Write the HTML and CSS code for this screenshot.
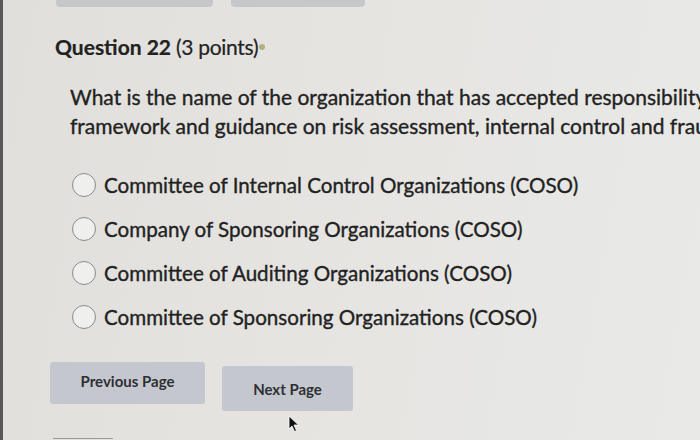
FILE: index.html
```html
<!DOCTYPE html>
<html>
<head>
<meta charset="utf-8">
<link rel="stylesheet" href="styles.css">
</head>
<body>
<div class="screen">
  <div class="topbar">
    <div class="tbtn tbtn-a"></div>
    <div class="tbtn tbtn-b"></div>
  </div>
  <div class="content">
    <h2 class="qtitle"><b>Question 22</b> <span class="pts">(3 points)</span><span class="mark"></span></h2>
    <p class="qtext">What is the name of the organization that has accepted responsibility for the<br>framework and guidance on risk assessment, internal control and fraud</p>
    <ul class="options">
      <li class="opt"><span class="radio"></span><span class="otext">Committee of Internal Control Organizations (COSO)</span></li>
      <li class="opt"><span class="radio"></span><span class="otext">Company of Sponsoring Organizations (COSO)</span></li>
      <li class="opt"><span class="radio"></span><span class="otext">Committee of Auditing Organizations (COSO)</span></li>
      <li class="opt"><span class="radio"></span><span class="otext">Committee of Sponsoring Organizations (COSO)</span></li>
    </ul>
    <div class="nav">
      <button class="btn btn-prev">Previous Page</button>
      <button class="btn btn-next">Next Page</button>
      <svg class="cursor" width="12" height="18" viewBox="0 0 12 18"><path d="M1 1 L1 14 L4 11 L6.5 16.5 L8.5 15.5 L6 10 L10.5 10 Z" fill="#111" stroke="#fff" stroke-width="0.8"/></svg>
    </div>
  </div>
  <div class="bottomline"></div>
</div>
</body>
</html>
```
FILE: styles.css
```css
html, body {
  margin: 0;
  padding: 0;
  width: 700px;
  height: 440px;
  overflow: hidden;
}
body {
  font-family: Lato, "Open Sans", sans-serif;
  color: #222222;
  background: #e4e3e0;
}
.screen {
  width: 697px;
  height: 440px;
  border-left: 3px solid #5a5856;
  background: linear-gradient(100deg, #e0dfdb 0%, #e5e4e1 45%, #e9e9e7 100%);
  position: relative;
  overflow: hidden;
}
.topbar {
  display: flex;
  gap: 18px;
  padding-left: 53px;
  height: 7px;
}
.tbtn {
  height: 7px;
  background: #c6c7cb;
  border-radius: 0 0 4px 4px;
}
.tbtn-a { width: 157px; }
.tbtn-b { width: 134px; }
.content {
  padding-left: 52px;
}
.qtitle {
  margin: 26px 0 0 0;
  font-size: 21px;
  font-weight: 400;
  line-height: 28px;
  white-space: nowrap;
  display: flex;
  align-items: center;
  -webkit-text-stroke: 0.2px #222;
}
.qtitle b { font-weight: 700; margin-right: 5px; }
.pts { letter-spacing: -0.3px; }
.mark {
  display: inline-block;
  width: 6px;
  height: 6px;
  margin-left: 1px;
  border-radius: 50%;
  background: #b8ad82;
}
.qtext {
  margin: 21px 0 0 15px;
  font-size: 21px;
  line-height: 29px;
  white-space: nowrap;
  -webkit-text-stroke: 0.35px #222;
}
.options {
  list-style: none;
  margin: 30px 0 0 17px;
  padding: 0;
  display: flex;
  flex-direction: column;
  gap: 14px;
}
.opt {
  display: flex;
  align-items: center;
  gap: 8px;
  height: 30px;
  font-size: 20.6px;
  -webkit-text-stroke: 0.35px #222;
}
.radio {
  width: 24px;
  height: 24px;
  border: 1.5px solid #8a8b8e;
  border-radius: 50%;
  background: #efefee;
  box-sizing: border-box;
  -webkit-text-stroke: 0;
}
.nav {
  display: flex;
  align-items: flex-start;
  gap: 17px;
  margin: 30px 0 0 -5px;
  position: relative;
}
.btn {
  font-family: Lato, "Open Sans", sans-serif;
  font-weight: 700;
  font-size: 15px;
  color: #2e3033;
  background: #c4c7ce;
  border: none;
  border-radius: 3px;
  height: 42px;
}
.btn-prev { width: 155px; padding: 0 0 4px 0; }
.btn-next { width: 131px; height: 45px; margin-top: 4px; }
.cursor {
  position: absolute;
  left: 238px;
  top: 53px;
}
.bottomline {
  position: absolute;
  left: 50px;
  bottom: 1px;
  width: 60px;
  height: 1px;
  background: #9a9a98;
}
```
